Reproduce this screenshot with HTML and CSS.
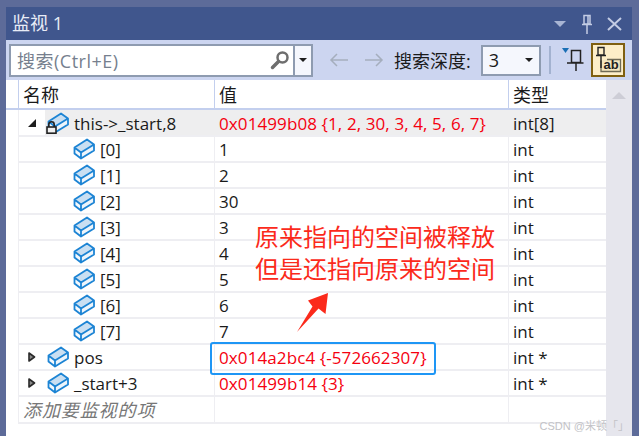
FILE: index.html
```html
<!DOCTYPE html>
<html lang="zh">
<head>
<meta charset="utf-8">
<title>监视 1</title>
<link rel="stylesheet" href="styles.css">
</head>
<body>
<svg class="defs" width="0" height="0" aria-hidden="true">
  <symbol id="cube" viewBox="0 0 22 22">
    <path d="M1.500 9.500 14 1.500 21 6.500 8 14.500Z" fill="#c9dff2"/>
    <path d="M1.500 9.500 8 14.500V20.500L1.500 15.500Z" fill="#f4f9fd"/>
    <path d="M8 14.500 21 6.500V12.500L8 20.500Z" fill="#eef5fb"/>
    <path d="M1.500 9.500 14 1.500 21 6.500V12.500L8 20.500 1.500 15.500ZM1.500 9.500 8 14.500 21 6.500M8 14.500V20.500" fill="none" stroke="#1c84d4" stroke-width="1.800" stroke-linejoin="round"/>
  </symbol>
  <symbol id="tri" viewBox="0 0 8 10">
    <path d="M1 1 6.500 5 1 9Z" fill="#8a8a8a" stroke="#2a2a2a" stroke-width="1.600" stroke-linejoin="round"/>
  </symbol>
</svg>
<div class="window">
  <header class="titlebar">
    <span class="title">监视 1</span>
    <div class="title-icons">
      <svg width="13" height="8" viewBox="0 0 13 8"><path d="M0 1H12L6 7Z" fill="#a9b5d4"/></svg>
      <svg width="12" height="20" viewBox="0 0 12 20"><path d="M3 1.500H9V10H3ZM1 10.500H11M6 11V20M7 2V10" fill="none" stroke="#c3cce4" stroke-width="1.500"/></svg>
      <svg width="15" height="14" viewBox="0 0 15 14"><path d="M1 1 14 13M14 1 1 13" stroke="#c3cce4" stroke-width="2" fill="none"/></svg>
    </div>
  </header>
  <div class="toolbar">
    <div class="search">
      <span class="search-input">
        <span class="placeholder">搜索(Ctrl+E)</span>
        <svg class="magnifier" width="20" height="20" viewBox="0 0 20 20"><circle cx="12.500" cy="7.500" r="5" fill="#fff" stroke="#6e6e6e" stroke-width="2.500"/><path d="M8.500 11.500 2.500 17.500" stroke="#6e6e6e" stroke-width="3.500" stroke-linecap="round"/></svg>
      </span>
      <span class="search-drop"><i class="caret"></i></span>
    </div>
    <svg class="arrow first" width="20" height="14" viewBox="0 0 20 14"><path d="M19 7H2M8 1 2 7 8 13" fill="none" stroke="#a5aebd" stroke-width="1.500"/></svg>
    <svg class="arrow" width="20" height="14" viewBox="0 0 20 14"><path d="M1 7H18M12 1 18 7 12 13" fill="none" stroke="#a5aebd" stroke-width="1.500"/></svg>
    <span class="depth-label">搜索深度:</span>
    <span class="depth"><span>3</span><i class="caret"></i></span>
    <span class="sep"></span>
    <svg class="pin-btn" width="22" height="26" viewBox="0 0 22 26"><path d="M0 1H7L3.500 6Z" fill="#1b6fb5"/><path d="M9.500 3.500H18.500V15.500H9.500ZM5 16H21.500M14 16V24" fill="none" stroke="#222" stroke-width="1.500"/></svg>
    <span class="toggle">
      <svg width="30" height="30" viewBox="0 0 30 30"><path d="M8 15.500V26.500H27.500V14.500H14" fill="#f5e7bf" stroke="#6f6a55" stroke-width="1.300"/><path d="M5 2.500H11V10H5ZM3 10.500H13M8 11V23" fill="none" stroke="#222" stroke-width="1.400"/><text x="10.500" y="24" class="ab">ab</text></svg>
    </span>
  </div>
  <div class="body">
    <div class="table">
      <div class="row head"><div class="gutter"></div><div class="cell name">名称</div><div class="cell">值</div><div class="cell">类型</div></div>
      <div class="row selected"><div class="gutter"></div><div class="cell name expand"><svg class="tri" width="8" height="8" viewBox="0 0 8 8"><path d="M8 0V8H0Z" fill="#1e1e1e"/></svg><span class="icon"><svg width="22" height="22"><use href="#cube"/></svg><svg class="lock" width="11" height="13" viewBox="0 0 11 13"><path d="M2.800 6.500V3.500A2.700 2.700 0 0 1 8.200 3.500V6.500" fill="none" stroke="#222" stroke-width="1.600"/><rect x="1" y="6" width="9" height="6.200" fill="#f0f0f0" stroke="#222" stroke-width="1.600"/></svg></span>this-&gt;_start,8</div><div class="cell val">0x01499b08 {1, 2, 30, 3, 4, 5, 6, 7}</div><div class="cell">int[8]</div></div>
      <div class="row"><div class="gutter"></div><div class="cell name child"><svg width="22" height="22"><use href="#cube"/></svg>[0]</div><div class="cell">1</div><div class="cell">int</div></div>
      <div class="row"><div class="gutter"></div><div class="cell name child"><svg width="22" height="22"><use href="#cube"/></svg>[1]</div><div class="cell">2</div><div class="cell">int</div></div>
      <div class="row"><div class="gutter"></div><div class="cell name child"><svg width="22" height="22"><use href="#cube"/></svg>[2]</div><div class="cell">30</div><div class="cell">int</div></div>
      <div class="row"><div class="gutter"></div><div class="cell name child"><svg width="22" height="22"><use href="#cube"/></svg>[3]</div><div class="cell">3</div><div class="cell">int</div></div>
      <div class="row"><div class="gutter"></div><div class="cell name child"><svg width="22" height="22"><use href="#cube"/></svg>[4]</div><div class="cell">4</div><div class="cell">int</div></div>
      <div class="row"><div class="gutter"></div><div class="cell name child"><svg width="22" height="22"><use href="#cube"/></svg>[5]</div><div class="cell">5</div><div class="cell">int</div></div>
      <div class="row"><div class="gutter"></div><div class="cell name child"><svg width="22" height="22"><use href="#cube"/></svg>[6]</div><div class="cell">6</div><div class="cell">int</div></div>
      <div class="row"><div class="gutter"></div><div class="cell name child"><svg width="22" height="22"><use href="#cube"/></svg>[7]</div><div class="cell">7</div><div class="cell">int</div></div>
      <div class="row"><div class="gutter"></div><div class="cell name expand"><svg class="tri" width="8" height="10"><use href="#tri"/></svg><span class="icon"><svg width="22" height="22"><use href="#cube"/></svg></span>pos</div><div class="cell val">0x014a2bc4 {-572662307}</div><div class="cell">int *</div></div>
      <div class="row"><div class="gutter"></div><div class="cell name expand"><svg class="tri" width="8" height="10"><use href="#tri"/></svg><span class="icon"><svg width="22" height="22"><use href="#cube"/></svg></span>_start+3</div><div class="cell val">0x01499b14 {3}</div><div class="cell">int *</div></div>
      <div class="row"><div class="gutter"></div><div class="cell name add">添加要监视的项</div><div class="cell"></div><div class="cell"></div></div>
      <div class="annotation">原来指向的空间被释放<br>但是还指向原来的空间</div>
      <svg class="callout-arrow" width="32" height="41" viewBox="0 0 32 41"><path d="M0 40 15.500 14.500 11 8.500 31 1 28.500 22 21.500 16.500Z" fill="#fb2a1b"/></svg>
      <div class="highlight"></div>
    </div>
    <div class="scrollbar"><svg width="14" height="8" viewBox="0 0 14 8"><path d="M7 0 14 7H0Z" fill="#cdcdd6"/></svg></div>
  </div>
</div>
<div class="watermark">CSDN @米顿「」</div>
</body>
</html>
```
FILE: styles.css
```css
* { box-sizing: border-box; }
html, body { margin: 0; height: 100%; }
body {
  width: 639px;
  height: 436px;
  overflow: hidden;
  background: #5d6b99;
  position: relative;
  font-family: "Open Sans", "Noto Sans CJK SC", sans-serif;
  font-size: 17px;
  color: #1a1a1a;
}
.defs { position: absolute; }
.window {
  margin: 7px 7px 0 6px;
  height: 429px;
  display: flex;
  flex-direction: column;
  background: #fff;
}
.titlebar {
  height: 33px;
  flex: none;
  background: #40568d;
  display: flex;
  align-items: center;
  justify-content: space-between;
  padding: 0 10px 3px 6px;
}
.title { color: #e8ecf6; font-size: 18px; }
.title-icons { display: flex; align-items: center; gap: 14px; padding-top: 3px; }
.toolbar {
  height: 40px;
  flex: none;
  background: #ccd5f0;
  display: flex;
  align-items: center;
  padding-left: 3px;
}
.search {
  width: 304px;
  height: 33px;
  display: flex;
  border: 2px solid #8e9bb0;
  background: #fff;
  flex: none;
}
.search-input { flex: 1; display: flex; align-items: center; justify-content: space-between; padding: 0 3px 0 6px; border-right: 2px solid #8e9bb0; }
.placeholder { color: #767f8e; font-size: 18px; letter-spacing: 0.5px; }
.search-drop { width: 16px; display: flex; align-items: center; justify-content: center; background: #f5f7fd; }
.caret { display: block; width: 0; height: 0; border-left: 4px solid transparent; border-right: 4px solid transparent; border-top: 4px solid #1e1e1e; }
.arrow { flex: none; margin-left: 15px; }
.arrow.first { margin-left: 16px; }
.depth-label { margin-left: 10px; white-space: nowrap; font-size: 18px; }
.depth {
  margin-left: 10px;
  width: 60px;
  height: 31px;
  flex: none;
  border: 2px solid #8e9bb0;
  background: #f5f7fd;
  display: flex;
  align-items: center;
  justify-content: space-between;
  padding: 0 6px;
  font-size: 18px;
}
.sep { width: 2px; height: 28px; background: #a3b2d0; margin-left: 8px; flex: none; }
.pin-btn { margin-left: 11px; flex: none; }
.toggle {
  margin-left: 7px;
  width: 34px;
  height: 34px;
  flex: none;
  border: 2px solid #7f5f10;
  background: #fdeec8;
  display: flex;
  align-items: center;
  justify-content: center;
}
.ab { font-family: "Liberation Sans", sans-serif; font-weight: 700; font-size: 13px; fill: #222; }
.body { flex: 1; display: flex; min-height: 0; }
.table { width: 600px; position: relative; flex: none; }
.scrollbar { width: 26px; flex: none; background: #e6e6ed; display: flex; justify-content: center; padding-top: 12px; align-items: flex-start; }
.row { display: grid; grid-template-columns: 13px 196px 294px 97px; height: 26px; }
.gutter { border-right: 1px solid #eeeef2; }
.cell {
  display: flex;
  align-items: center;
  padding: 2px 0 0 4px;
  white-space: nowrap;
  border-right: 1px solid #eeeef2;
  border-bottom: 2px solid #eeeef2;
}
.cell:last-child { border-right: none; }
.row.head { height: 30px; font-size: 18px; }
.head .cell { padding-top: 0; }
.head .gutter { border-right: 1px solid #c3cfee; border-bottom: 2px solid #c3cfee; }
.head .cell { border-right: 1px solid #c3cfee; border-bottom: 2px solid #c3cfee; }
.head .cell:last-child { border-right: none; }
.selected .cell { background: #eeeeef; border-right-color: #eeeeef; }
.selected .cell.name { background: linear-gradient(to right, #fff 26px, #eeeeef 26px); }
.expand { padding-left: 9px; }
.child { padding-left: 54px; }
.child svg { margin: -1px 5px 0 0; }
.icon { position: relative; width: 22px; height: 22px; margin: -1px 5px 0 11px; flex: none; }
.icon svg { display: block; }
.lock { position: absolute; left: -1px; bottom: 0; }
.tri { flex: none; display: block; margin-top: -2px; }
.val { color: #f5000f; letter-spacing: 0.1px; }
.add { font-style: italic; color: #777; font-size: 18px; letter-spacing: 0.9px; padding-top: 0; }
.annotation {
  position: absolute;
  left: 249px;
  top: 140px;
  color: #fb2a1b;
  font-size: 24px;
  line-height: 32px;
  white-space: nowrap;
  font-family: "Noto Sans CJK SC", sans-serif;
}
.callout-arrow { position: absolute; left: 291px; top: 212px; }
.highlight {
  position: absolute;
  left: 204px;
  top: 262px;
  width: 226px;
  height: 33px;
  border: 2px solid #1e96f5;
  border-radius: 3px;
}
.watermark {
  position: absolute;
  right: 10px;
  bottom: 3px;
  font-size: 11px;
  color: #c2c2c6;
  font-family: "Liberation Sans", "Noto Sans CJK SC", sans-serif;
}
```
